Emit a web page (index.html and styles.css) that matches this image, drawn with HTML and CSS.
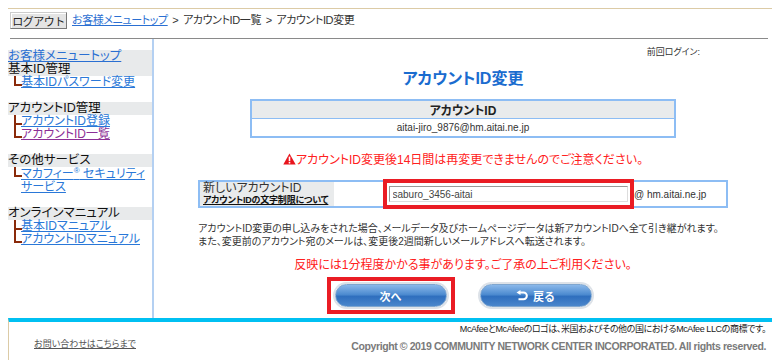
FILE: index.html
```html
<!DOCTYPE html>
<html lang="ja">
<head>
    <meta charset="UTF-8">
    <title>アカウントID変更</title>
    <link rel="stylesheet" href="styles.css">
</head>
<body>
<div class="page">

    <div class="topbar">
        <button class="logout">ログアウト</button>
        <div class="crumbs"><a href="#">お客様メニュートップ</a> &gt; アカウントID一覧 &gt; アカウントID変更</div>
    </div>

    <div class="wrap">
        <div class="side">
            <div class="group">
                <a class="head head-link" href="#">お客様メニュートップ</a>
                <div class="head">基本ID管理</div>
                <ul class="tree">
                    <li><a href="#">基本IDパスワード変更</a></li>
                </ul>
            </div>
            <div class="group">
                <div class="head">アカウントID管理</div>
                <ul class="tree">
                    <li><a href="#">アカウントID登録</a></li>
                    <li><a class="visited" href="#">アカウントID一覧</a></li>
                </ul>
            </div>
            <div class="group">
                <div class="head">その他サービス</div>
                <ul class="tree">
                    <li class="two"><a href="#">マカフィー<sup>®</sup> セキュリティ<br>サービス</a></li>
                </ul>
            </div>
            <div class="group">
                <div class="head">オンラインマニュアル</div>
                <ul class="tree">
                    <li><a href="#">基本IDマニュアル</a></li>
                    <li><a href="#">アカウントIDマニュアル</a></li>
                </ul>
            </div>
        </div>

        <div class="main">
            <div class="last-login">前回ログイン:</div>
            <h1>アカウントID変更</h1>

            <table class="id-table">
                <tr><th>アカウントID</th></tr>
                <tr><td>aitai-jiro_9876@hm.aitai.ne.jp</td></tr>
            </table>

            <p class="warn">
                <svg class="warn-icon" width="13" height="12" viewBox="0 0 13 12">
                    <path d="M6.5 0.5 L12.7 11.5 L0.3 11.5 Z" fill="#e8141c"/>
                    <rect x="5.7" y="3.6" width="1.6" height="4.6" fill="#fff"/>
                    <rect x="5.7" y="9" width="1.6" height="1.5" fill="#fff"/>
                </svg>アカウントID変更後14日間は再変更できませんのでご注意ください。
            </p>

            <table class="form-table">
                <tr>
                    <th>新しいアカウントID<br><a href="#">アカウントIDの文字制限について</a></th>
                    <td class="input-cell"><span class="mark"><input type="text" value="saburo_3456-aitai"></span></td>
                    <td class="domain">@ hm.aitai.ne.jp</td>
                </tr>
            </table>

            <p class="note">アカウントID変更の申し込みをされた場合、メールデータ及びホームページデータは新アカウントIDへ全て引き継がれます。<br>また、変更前のアカウント宛のメールは、変更後2週間新しいメールアドレスへ転送されます。</p>

            <p class="notice">反映には1分程度かかる事があります。ご了承の上ご利用ください。</p>

            <div class="buttons">
                <span class="mark"><button class="pill">次へ</button></span>
                <button class="pill">
                    <svg width="12" height="11" viewBox="0 0 12 11">
                        <path d="M4 2.5 H7.5 A3.3 3.3 0 0 1 7.5 9.2 H2.5" fill="none" stroke="#fff" stroke-width="2"/>
                        <path d="M0.5 2.5 L4.5 0 L4.5 5 Z" fill="#fff"/>
                    </svg>戻る
                </button>
            </div>
        </div>
    </div>

    <div class="footer">
        <a class="contact" href="#">お問い合わせはこちらまで</a>
        <div class="legal">
            <p class="mcafee">McAfeeとMcAfeeのロゴは、米国およびその他の国におけるMcAfee LLCの商標です。</p>
            <p class="copy">Copyright © 2019 COMMUNITY NETWORK CENTER INCORPORATED. All rights reserved.</p>
        </div>
    </div>

</div>
</body>
</html>
```

FILE: styles.css
```css
body {
    margin: 0;
    font-family: "Liberation Sans", "Noto Sans CJK JP", sans-serif;
    font-feature-settings: "palt";
    color: #222;
    background: #fff;
}
a {
    color: #2a6fd2;
}
p {
    margin: 0;
}
.page {
    margin: 8px 8px 0 8px;
    border-top: 1px solid #dccba6;
}

/* top bar */
.topbar {
    height: 30px;
    box-sizing: border-box;
    margin: 0 4px 0 2px;
    padding-top: 3px;
    border-bottom: 1px solid #8a8a8a;
    display: flex;
    align-items: flex-start;
    gap: 5px;
}
.logout {
    height: 17px;
    width: 57px;
    padding: 0;
    font-family: inherit;
    font-size: 11px;
    letter-spacing: -0.5px;
    color: #222;
    background: #e4e4e4;
    border: 1px solid #777;
    border-top-color: #ccc;
    border-left-color: #ccc;
    box-shadow: inset 1px 1px 0 #fff;
}
.crumbs {
    font-size: 11px;
    letter-spacing: -0.4px;
    word-spacing: 2px;
    line-height: 17px;
    color: #333;
}

/* layout */
.wrap {
    display: flex;
    height: 279px;
}
.side {
    width: 144px;
    border-right: 2px solid #b4d0f2;
    padding-top: 11px;
    box-sizing: content-box;
}
.main {
    flex: 1;
    text-align: center;
}

/* sidebar */
.group {
    margin-bottom: 13px;
}
.head {
    display: block;
    background: #e8eaeb;
    font-size: 12.5px;
    line-height: 13px;
    color: #111;
}
.head-link {
    color: #2a6fd2;
}
.tree {
    list-style: none;
    margin: 0;
    padding: 0;
}
.tree li {
    position: relative;
    padding-left: 13px;
    font-size: 12px;
    line-height: 13px;
}
.tree li.two {
    line-height: 13px;
    padding-top: 1px;
}
.tree li::before {
    content: "";
    position: absolute;
    left: 6px;
    top: 0;
    width: 6px;
    height: 8px;
    border-left: 2px solid #8a2a0a;
    border-bottom: 2px solid #8a2a0a;
}
.tree li:not(:last-child)::after {
    content: "";
    position: absolute;
    left: 6px;
    top: 8px;
    bottom: 0;
    border-left: 2px solid #8a2a0a;
}
.tree a {
    color: #2a78d8;
}
.tree a.visited {
    color: #8c2f96;
}
.tree sup {
    font-size: 8px;
    line-height: 0;
}

/* main */
.last-login {
    margin-top: 9px;
    padding-right: 72px;
    text-align: right;
    font-size: 9px;
    line-height: 9px;
    color: #333;
}
h1 {
    margin: 12px 0 0 0;
    font-size: 16px;
    line-height: 20px;
    color: #1a6ccf;
}
.id-table {
    margin: 10px auto 0 auto;
    width: 426px;
    border-collapse: collapse;
    border: 2px solid #8dbdf4;
}
.id-table th {
    background: #e9ebec;
    font-size: 12px;
    height: 17px;
    padding: 0;
    border-bottom: 1px solid #8dbdf4;
}
.id-table td {
    font-size: 10px;
    height: 17px;
    padding: 0;
    color: #333;
}
.warn {
    margin-top: 14px;
    font-size: 12px;
    line-height: 16px;
    color: #ff2020;
}
.warn-icon {
    vertical-align: -1px;
}
.form-table {
    margin: 12px auto 0 auto;
    width: 530px;
    height: 26px;
    border-collapse: collapse;
    border: 2px solid #8dbdf4;
}
.form-table th {
    width: 128px;
    white-space: nowrap;
    background: #e9ebec;
    text-align: left;
    font-weight: normal;
    font-size: 12px;
    line-height: 11px;
    padding: 1px 3px 0 3px;
    color: #333;
}
.form-table th a {
    font-size: 9px;
    letter-spacing: -0.2px;
    font-weight: bold;
    color: #111;
}
.input-cell {
    padding: 0 0 0 49px;
    width: 250px;
}
.mark {
    display: inline-block;
    padding: 3px 2px;
    outline: 4px solid #ea1c24;
}
.input-cell input {
    display: block;
    width: 239px;
    height: 16px;
    box-sizing: border-box;
    padding: 0 3px;
    border: 1px solid #999;
    border-right-color: #ddd;
    border-bottom-color: #ddd;
    font-family: inherit;
    font-size: 10px;
    color: #444;
}
.domain {
    text-align: left;
    font-size: 10px;
    color: #333;
    padding-left: 1px;
}
.note {
    width: 530px;
    margin: 14px auto 0 auto;
    text-align: left;
    font-size: 10px;
    line-height: 13px;
    color: #333;
}
.notice {
    margin-top: 9px;
    font-size: 12px;
    line-height: 16px;
    color: #ff2020;
}
.buttons {
    margin-top: 8px;
    display: flex;
    justify-content: center;
    align-items: center;
    gap: 29px;
    padding-right: 4px;
}
.buttons .mark {
    padding: 3px 4px;
}
.pill {
    display: flex;
    align-items: center;
    justify-content: center;
    gap: 5px;
    width: 112px;
    height: 23px;
    padding: 0;
    border: 1px solid #7fa6cf;
    border-radius: 12px;
    background: linear-gradient(#8ab8ea, #4d8bd0 45%, #2f6fbe 55%, #4a86cc);
    box-shadow: 0 0 0 2px #dde2e8;
    color: #fff;
    font-family: inherit;
    font-size: 11px;
    font-weight: bold;
}

/* footer */
.footer {
    border-top: 4px solid #00c0f2;
    border-left: 1px solid #dccba6;
    height: 40px;
    display: flex;
    justify-content: space-between;
    align-items: flex-start;
}
.contact {
    margin: 15px 0 0 25px;
    font-size: 9px;
    color: #555;
}
.legal {
    text-align: right;
    padding-right: 6px;
}
.mcafee {
    margin-top: 1px;
    font-size: 9px;
    letter-spacing: -0.4px;
    line-height: 12px;
    color: #222;
}
.copy {
    margin-top: 5px;
    font-size: 10.5px;
    letter-spacing: -0.4px;
    font-weight: bold;
    color: #7a7a7a;
}
```
